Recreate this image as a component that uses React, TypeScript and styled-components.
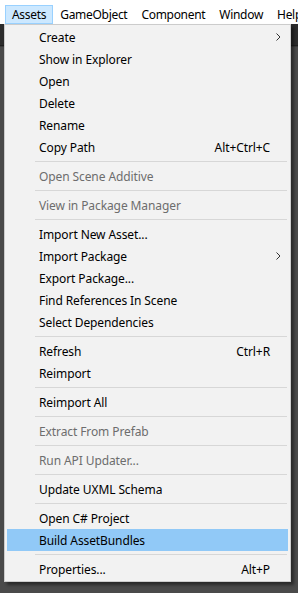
import styled, { createGlobalStyle } from "styled-components";

const GlobalStyle = createGlobalStyle`
  html, body {
    margin: 0;
    padding: 0;
    background: #454545;
  }
  body {
    font-family: "Noto Sans", "Segoe UI", sans-serif;
    font-size: 12px;
  }
`;

const Page = styled.div`
  width: 298px;
  height: 593px;
  display: flex;
  flex-direction: column;
  overflow: hidden;
`;

const MenuBar = styled.div`
  height: 24px;
  background: #ffffff;
  display: flex;
  align-items: flex-end;
  padding-left: 5px;
  box-sizing: border-box;
  flex-shrink: 0;
  overflow: hidden;
`;

const BarItem = styled.div<{ open?: boolean }>`
  height: 19px;
  line-height: 17px;
  padding: 0 6px;
  box-sizing: border-box;
  color: #000;
  white-space: nowrap;
  letter-spacing: -0.3px;
  border: 1px solid ${(p) => (p.open ? "#99d1ff" : "transparent")};
  background: ${(p) => (p.open ? "#cce8ff" : "transparent")};
`;

const Editor = styled.div`
  flex: 1;
  position: relative;
  background: #474747;
  display: flex;
  flex-direction: column;
`;

const Toolbar = styled.div`
  height: 21px;
  background: #2c2c2c;
  border-bottom: 1px solid #1f1f1f;
`;

const Panel = styled.div`
  flex: 1;
  background: #4a4a4a;
  border-top: 1px solid #3a3a3a;
`;

const Dropdown = styled.div`
  position: absolute;
  left: 4px;
  top: 0;
  width: 287px;
  box-sizing: border-box;
  background: #f2f2f2;
  border: 1px solid #cccccc;
  padding: 1px 2px 1px 2px;
  box-shadow: 3px 3px 3px rgba(0, 0, 0, 0.45);
`;

const Row = styled.div<{ disabled?: boolean; active?: boolean }>`
  height: 22px;
  display: flex;
  align-items: center;
  padding-left: 32px;
  color: ${(p) => (p.disabled ? "#6d6d6d" : "#000000")};
  background: ${(p) => (p.active ? "#91c9f7" : "transparent")};
  white-space: nowrap;
  letter-spacing: -0.1px;
`;

const Label = styled.span`
  flex: 1;
`;

const Shortcut = styled.span`
  text-align: right;
`;

const ArrowCell = styled.span`
  width: 18px;
  display: flex;
  align-items: center;
  justify-content: center;
  padding-right: 2px;
  box-sizing: border-box;
`;

const Separator = styled.div`
  height: 1px;
  margin: 3px 1px 3px 28px;
  background: #d7d7d7;
`;

type Item =
  | "sep"
  | {
      label: string;
      shortcut?: string;
      arrow?: boolean;
      disabled?: boolean;
      active?: boolean;
    };

const items: Item[] = [
  { label: "Create", arrow: true },
  { label: "Show in Explorer" },
  { label: "Open" },
  { label: "Delete" },
  { label: "Rename" },
  { label: "Copy Path", shortcut: "Alt+Ctrl+C" },
  "sep",
  { label: "Open Scene Additive", disabled: true },
  "sep",
  { label: "View in Package Manager", disabled: true },
  "sep",
  { label: "Import New Asset..." },
  { label: "Import Package", arrow: true },
  { label: "Export Package..." },
  { label: "Find References In Scene" },
  { label: "Select Dependencies" },
  "sep",
  { label: "Refresh", shortcut: "Ctrl+R" },
  { label: "Reimport" },
  "sep",
  { label: "Reimport All" },
  "sep",
  { label: "Extract From Prefab", disabled: true },
  "sep",
  { label: "Run API Updater...", disabled: true },
  "sep",
  { label: "Update UXML Schema" },
  "sep",
  { label: "Open C# Project" },
  { label: "Build AssetBundles", active: true },
  "sep",
  { label: "Properties...", shortcut: "Alt+P" },
];

const Chevron = () => (
  <svg width="5" height="8" viewBox="0 0 5 8">
    <polyline points="0.5,0.5 4,4 0.5,7.5" fill="none" stroke="#333" strokeWidth="1" />
  </svg>
);

export default function App() {
  return (
    <Page>
      <GlobalStyle />
      <MenuBar>
        <BarItem open>Assets</BarItem>
        <BarItem>GameObject</BarItem>
        <BarItem>Component</BarItem>
        <BarItem>Window</BarItem>
        <BarItem>Help</BarItem>
      </MenuBar>
      <Editor>
        <Toolbar />
        <Panel />
        <Dropdown>
          {items.map((it, i) =>
            it === "sep" ? (
              <Separator key={i} />
            ) : (
              <Row key={i} disabled={it.disabled} active={it.active}>
                <Label>{it.label}</Label>
                {it.shortcut && <Shortcut>{it.shortcut}</Shortcut>}
                <ArrowCell>{it.arrow && <Chevron />}</ArrowCell>
              </Row>
            )
          )}
        </Dropdown>
      </Editor>
    </Page>
  );
}
